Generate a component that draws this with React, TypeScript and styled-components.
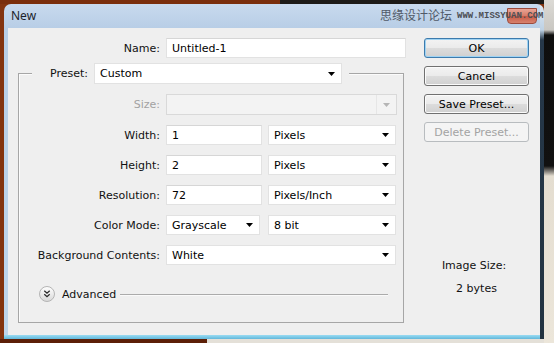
import React from "react";
import styled, { createGlobalStyle } from "styled-components";

const Global = createGlobalStyle`
  html, body { margin: 0; padding: 0; }
  body { width: 554px; height: 343px; overflow: hidden; font-family: "DejaVu Sans", Verdana, sans-serif; font-size: 11px; color: #000; }
  * { box-sizing: border-box; }
`;

const Desktop = styled.div`
  width: 554px;
  height: 343px;
  padding: 4px 10px 4px 4px;
  background:
    linear-gradient(to bottom, #dcdad5 0, #c9c7c2 30px, #0e0e0e 35px, #111 166px, #e4ddd0 176px, #ece6da 100%) right top / 10px 100% no-repeat,
    linear-gradient(to right, #5c1f07 0, #5c1f07 207px, #e4e0d8 207px) left bottom / 100% 4px no-repeat,
    linear-gradient(to right, #7a2e0c 0, #7a2e0c 280px, #1c1a18 280px) left top / 100% 4px no-repeat,
    #83340f;
`;

const Window = styled.div`
  width: 540px;
  height: 335px;
  display: flex;
  flex-direction: column;
  border-radius: 7px 7px 0 0;
  padding: 0 4px 4px 4px;
  background:
    linear-gradient(to bottom, #dfe9f3 0, #bdd1e4 26px, #26384a 36px, #22323f 100%) right top / 4px 100% no-repeat,
    linear-gradient(to bottom, #9adcf3, #62b7da) left bottom / 100% 4px no-repeat,
    linear-gradient(to bottom, #c8daee 0, #b8cee6 24px, #bed5eb 100%);
`;

const TitleBar = styled.div`
  position: relative;
  height: 24px;
  display: flex;
  align-items: center;
  padding: 0 3px;
`;

const Title = styled.span`
  font-family: "Noto Sans", "Open Sans", sans-serif;
  font-size: 12px;
  color: #1b1f2a;
  flex: 1;
  margin-top: -2px;
`;

const CloseButton = styled.div`
  width: 30px;
  height: 16px;
  border-radius: 0 0 4px 4px;
  border: 1px solid #9c4a3c;
  background: linear-gradient(to bottom, #eaa596 0, #d77a66 50%, #c85a45 51%, #d7826e 100%);
`;

const Watermark = styled.div`
  position: absolute;
  left: 372px;
  top: 3px;
  display: flex;
  align-items: center;
  gap: 5px;
  white-space: nowrap;
  pointer-events: none;
`;

const WatermarkCN = styled.span`
  font-family: "Noto Sans CJK SC", sans-serif;
  font-size: 12px;
  line-height: 16px;
  color: #505a68;
`;

const WatermarkURL = styled.span`
  font-family: "Liberation Mono", monospace;
  font-size: 9px;
  font-weight: bold;
  color: #4d4f55;
  margin-top: 2px;
`;

const Client = styled.div`
  flex: 1;
  background: #efefef;
  display: grid;
  grid-template-columns: 410px 105px;
  column-gap: 6px;
  padding: 10px 11px 0 0;
  align-content: start;
`;

const LeftCol = styled.div`
  display: flex;
  flex-direction: column;
`;

const NameRow = styled.div`
  display: grid;
  grid-template-columns: 152px 240px;
  column-gap: 6px;
  align-items: center;
  height: 20px;
`;

const Label = styled.span<{ $disabled?: boolean }>`
  text-align: right;
  white-space: nowrap;
  color: ${(p) => (p.$disabled ? "#a2a2a2" : "#111")};
`;

const TextField = styled.input<{ $w: number }>`
  width: ${(p) => p.$w}px;
  height: 20px;
  font: inherit;
  color: #000;
  background: #fff;
  border: 1px solid #e2e2e2;
  border-top-color: #d6d6d6;
  padding: 0 0 0 5px;
  outline: none;
`;

const Group = styled.fieldset`
  margin: 5px 0 0 10px;
  width: 386px;
  min-width: 0;
  padding: 10px 0 18px 0;
  border: 1px solid #a6a6a6;
  box-shadow: inset 1px 1px 0 #fbfbfb;
`;

const Legend = styled.legend`
  margin-left: 13px;
  padding: 0 7px 0 0;
  display: flex;
  align-items: center;
  gap: 6px;
  background: #efefef;
`;

const LegendLabel = styled(Label)`
  width: 56px;
`;

const Rows = styled.div`
  display: flex;
  flex-direction: column;
  gap: 10px;
`;

const Row = styled.div<{ $h?: number }>`
  display: grid;
  grid-template-columns: 141px auto;
  column-gap: 6px;
  align-items: center;
  height: ${(p) => p.$h ?? 20}px;
`;

const Controls = styled.div<{ $gap?: number }>`
  display: flex;
  gap: ${(p) => p.$gap ?? 6}px;
  align-items: center;
`;

const Select = styled.div<{ $w: number; $h?: number; $disabled?: boolean }>`
  width: ${(p) => p.$w}px;
  height: ${(p) => p.$h ?? 20}px;
  display: flex;
  align-items: center;
  justify-content: space-between;
  padding: 0 ${(p) => (p.$disabled ? 0 : 6)}px 0 5px;
  background: ${(p) => (p.$disabled ? "#f3f3f3" : "#fff")};
  border: 1px solid ${(p) => (p.$disabled ? "#d9d9d9" : "#e2e2e2")};
  color: #000;
  white-space: nowrap;
`;

const DisabledArrowBox = styled.div`
  height: 100%;
  display: flex;
  align-items: center;
  padding: 0 6px;
  border-left: 1px solid #e6e6e6;
`;

const AdvancedRow = styled.div`
  display: flex;
  align-items: center;
  height: 20px;
  margin-top: 19px;
  padding-left: 20px;
`;

const AdvancedText = styled.span`
  margin-left: 7px;
  color: #111;
`;

const Rule = styled.div`
  flex: 1;
  height: 1px;
  background: #ababab;
  box-shadow: 0 1px 0 #fafafa;
  margin: 0 15px 0 4px;
`;

const RightCol = styled.div`
  display: flex;
  flex-direction: column;
  gap: 8px;
`;

const Button = styled.button<{ $primary?: boolean }>`
  width: 105px;
  height: 20px;
  padding: 0;
  font: inherit;
  color: #000;
  border: 1px solid ${(p) => (p.$primary ? "#3d7bad" : "#707070")};
  border-radius: 3px;
  background: linear-gradient(to bottom, #f3f3f3 0%, #ebebeb 48%, #dcdcdc 52%, #d0d0d0 100%);
  box-shadow: ${(p) => (p.$primary ? "inset 0 0 0 1px #9fd3f3" : "inset 0 0 0 1px #fbfbfb")};
  &:disabled {
    color: #a3a3a3;
    border-color: #b8bcbf;
    background: #f4f4f4;
    box-shadow: none;
  }
`;

const SizeInfo = styled.div`
  margin-top: 109px;
  display: flex;
  flex-direction: column;
  align-items: center;
  gap: 9px;
  line-height: 14px;
  color: #111;
`;

const SizeTitle = styled.span`
  margin-right: 5px;
`;

const Arrow = ({ color = "#000" }: { color?: string }) => (
  <svg width="7" height="4" viewBox="0 0 7 4">
    <polygon points="0,0 7,0 3.5,4" fill={color} />
  </svg>
);

const AdvancedIcon = () => (
  <svg width="16" height="16" viewBox="0 0 16 16">
    <defs>
      <linearGradient id="advg" x1="0" y1="0" x2="0" y2="1">
        <stop offset="0" stopColor="#ffffff" />
        <stop offset="1" stopColor="#d8d8d8" />
      </linearGradient>
    </defs>
    <circle cx="8" cy="8" r="7.5" fill="url(#advg)" stroke="#b4b4b4" />
    <path d="M5.3 4.8 L8 7.2 L10.7 4.8 M5.3 8.3 L8 10.7 L10.7 8.3" fill="none" stroke="#2a2a2a" strokeWidth="1.3" />
  </svg>
);

export default function App() {
  return (
    <>
      <Global />
      <Desktop>
        <Window>
          <TitleBar>
            <Title>New</Title>
            <CloseButton />
            <Watermark>
              <WatermarkCN>思缘设计论坛</WatermarkCN>
              <WatermarkURL>WWW.MISSYUAN.COM</WatermarkURL>
            </Watermark>
          </TitleBar>
          <Client>
            <LeftCol>
              <NameRow>
                <Label>Name:</Label>
                <TextField $w={240} readOnly defaultValue="Untitled-1" />
              </NameRow>
              <Group>
                <Legend>
                  <LegendLabel>Preset:</LegendLabel>
                  <Select $w={248} $h={21}>
                    Custom
                    <Arrow />
                  </Select>
                </Legend>
                <Rows>
                  <Row $h={21}>
                    <Label $disabled>Size:</Label>
                    <Select $w={231} $h={21} $disabled>
                      <span />
                      <DisabledArrowBox>
                        <Arrow color="#b5b5b5" />
                      </DisabledArrowBox>
                    </Select>
                  </Row>
                  <Row>
                    <Label>Width:</Label>
                    <Controls>
                      <TextField $w={96} readOnly defaultValue="1" />
                      <Select $w={128}>
                        Pixels
                        <Arrow />
                      </Select>
                    </Controls>
                  </Row>
                  <Row>
                    <Label>Height:</Label>
                    <Controls>
                      <TextField $w={96} readOnly defaultValue="2" />
                      <Select $w={128}>
                        Pixels
                        <Arrow />
                      </Select>
                    </Controls>
                  </Row>
                  <Row>
                    <Label>Resolution:</Label>
                    <Controls>
                      <TextField $w={96} readOnly defaultValue="72" />
                      <Select $w={128}>
                        Pixels/Inch
                        <Arrow />
                      </Select>
                    </Controls>
                  </Row>
                  <Row>
                    <Label>Color Mode:</Label>
                    <Controls $gap={8}>
                      <Select $w={94}>
                        Grayscale
                        <Arrow />
                      </Select>
                      <Select $w={128}>
                        8 bit
                        <Arrow />
                      </Select>
                    </Controls>
                  </Row>
                  <Row>
                    <Label>Background Contents:</Label>
                    <Select $w={230}>
                      White
                      <Arrow />
                    </Select>
                  </Row>
                </Rows>
                <AdvancedRow>
                  <AdvancedIcon />
                  <AdvancedText>Advanced</AdvancedText>
                  <Rule />
                </AdvancedRow>
              </Group>
            </LeftCol>
            <RightCol>
              <Button $primary>OK</Button>
              <Button>Cancel</Button>
              <Button>Save Preset...</Button>
              <Button disabled>Delete Preset...</Button>
              <SizeInfo>
                <SizeTitle>Image Size:</SizeTitle>
                <span>2 bytes</span>
              </SizeInfo>
            </RightCol>
          </Client>
        </Window>
      </Desktop>
    </>
  );
}
